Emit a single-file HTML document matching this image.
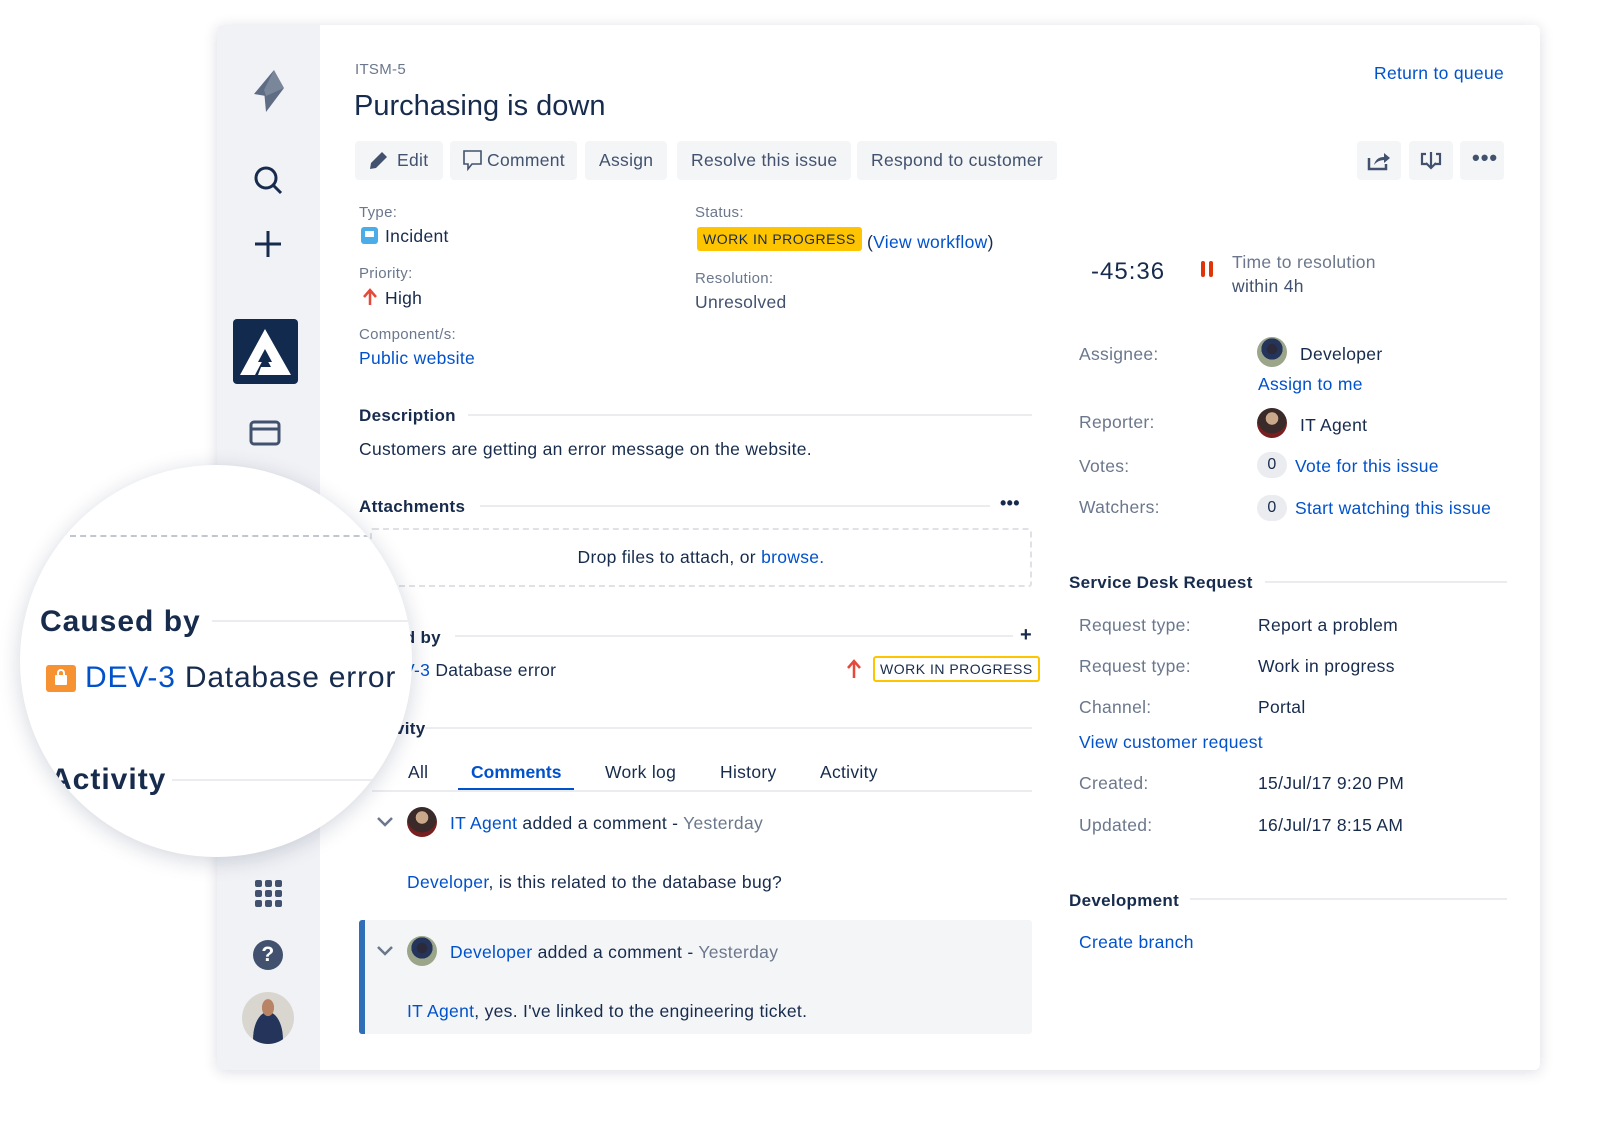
<!DOCTYPE html><html><head><meta charset="utf-8"><style>
*{margin:0;padding:0;box-sizing:border-box}
body{width:1600px;height:1123px;background:#fff;font-family:"Liberation Sans",sans-serif;color:#172b4d;position:relative;overflow:hidden;font-size:17.5px;letter-spacing:.3px}
.a{position:absolute;white-space:nowrap}
.card{position:absolute;left:217px;top:25px;width:1323px;height:1045px;background:#fff;border-radius:6px;box-shadow:0 2px 14px rgba(9,30,66,.15);overflow:hidden}
.side{position:absolute;left:217px;top:25px;width:103px;height:1045px;background:#f1f2f6;border-radius:6px 0 0 6px}
.lab{color:#6b778c}
.lnk{color:#0052cc}
.btn{position:absolute;top:141px;height:39px;background:#f4f5f7;border-radius:4px;font-size:17.5px;line-height:39px;color:#42526e;padding:0 14px}
.hd{font-weight:bold;font-size:17px}
.line{position:absolute;height:2px;background:#ebecf0}
.ib{position:absolute;top:141px;width:44px;height:39px;background:#f4f5f7;border-radius:4px}
.av{position:absolute;border-radius:50%;width:30px;height:30px;background:radial-gradient(circle at 50% 35%,#c9a98a 0 25%,#3a2a2a 26% 60%,#7a1f1f 61%)}
.av2{background:radial-gradient(circle at 50% 40%,#2a2a3a 0 22%,#24345a 23% 45%,#9aa58a 46%)}
.cnt{position:absolute;width:30px;height:26px;border-radius:13px;background:#ebecf0;text-align:center;line-height:26px;font-size:16px}
.wip{position:absolute;background:#ffc400;color:#172b4d;font-size:14px;letter-spacing:.5px;padding:0 6px;line-height:24px;border-radius:3px}
</style></head><body>
<div class="card"></div>
<div class="side"></div>
<svg class="a" style="left:250px;top:68px" width="38" height="46" viewBox="0 0 38 46"><path d="M24 2 L4 26 L16 28 Z" fill="#5e6c84"/><path d="M14 22 L34 20 L16 44 Z" fill="#5e6c84"/><path d="M24 2 L14 22 L16 28 L34 20 Z" fill="#7a869a"/></svg>
<svg class="a" style="left:253px;top:165px" width="32" height="32" viewBox="0 0 32 32"><circle cx="13" cy="13" r="10" fill="none" stroke="#172b4d" stroke-width="3"/><path d="M20 20 L28 28" stroke="#172b4d" stroke-width="3"/></svg>
<svg class="a" style="left:254px;top:230px" width="28" height="28"><path d="M14 1V27M1 14H27" stroke="#172b4d" stroke-width="3"/></svg>
<div class="a" style="left:233px;top:319px;width:65px;height:65px;background:#112a4e;border-radius:4px"></div>
<svg class="a" style="left:233px;top:319px" width="65" height="65" viewBox="0 0 65 65"><path d="M32 10 L7 56 H22 L32 37 L38 48 H28 L25 56 H58 Z" fill="#fff"/><path d="M32 30 L25 43 H39 Z" fill="#112a4e"/></svg>
<svg class="a" style="left:249px;top:420px" width="32" height="26"><rect x="2" y="2" width="28" height="22" rx="3" fill="none" stroke="#42526e" stroke-width="3"/><path d="M2 9H30" stroke="#42526e" stroke-width="3"/></svg>
<svg class="a" style="left:255px;top:880px" width="28" height="28"><g fill="#42526e"><rect x="0" y="0" width="7" height="7" rx="2"/><rect x="10" y="0" width="7" height="7" rx="2"/><rect x="20" y="0" width="7" height="7" rx="2"/><rect x="0" y="10" width="7" height="7" rx="2"/><rect x="10" y="10" width="7" height="7" rx="2"/><rect x="20" y="10" width="7" height="7" rx="2"/><rect x="0" y="20" width="7" height="7" rx="2"/><rect x="10" y="20" width="7" height="7" rx="2"/><rect x="20" y="20" width="7" height="7" rx="2"/></g></svg>
<div class="a" style="left:253px;top:940px;width:30px;height:30px;border-radius:50%;background:#42526e;color:#fff;font-weight:bold;font-size:21px;text-align:center;line-height:30px">?</div>
<div class="a" style="left:242px;top:992px;width:52px;height:52px;border-radius:50%;background:radial-gradient(ellipse at 50% 30%,#b98466 0 16%,transparent 17%),radial-gradient(ellipse at 50% 90%,#24345a 0 40%,transparent 41%),#d9d6d0"></div>

<div class="a lab" style="left:355px;top:61px;font-size:15px">ITSM-5</div>
<div class="a" style="left:354px;top:90px;font-size:29px;letter-spacing:0">Purchasing is down</div>
<div class="a lnk" style="left:1374px;top:63px">Return to queue</div>
<div class="btn" style="left:355px;width:88px;padding-left:42px">Edit</div>
<svg class="a" style="left:367px;top:150px" width="22" height="22"><path d="M3 19 L4 13 L15 2 L20 7 L9 18 Z" fill="#42526e"/></svg>
<div class="btn" style="left:450px;width:127px;padding-left:37px">Comment</div>
<svg class="a" style="left:463px;top:150px" width="20" height="22"><path d="M1 1H18V14H9L5 19V14H1Z" fill="none" stroke="#42526e" stroke-width="1.6"/></svg>
<div class="btn" style="left:585px">Assign</div>
<div class="btn" style="left:677px">Resolve this issue</div>
<div class="btn" style="left:857px">Respond to customer</div>
<div class="ib" style="left:1357px"></div><div class="ib" style="left:1409px"></div><div class="ib" style="left:1460px"></div>
<svg class="a" style="left:1367px;top:150px" width="24" height="22"><path d="M2 8V19H19V14" fill="none" stroke="#42526e" stroke-width="2.5"/><path d="M7 15 Q9 7 17 7V3L23 8L17 13V10Q11 10 7 15Z" fill="#42526e"/></svg>
<svg class="a" style="left:1420px;top:150px" width="22" height="22"><path d="M6 4H2V14H7M15 14H20V4H16" fill="none" stroke="#42526e" stroke-width="2.2"/><path d="M11 2V18M6 13L11 18L16 13" fill="none" stroke="#42526e" stroke-width="2.2"/></svg>
<div class="a" style="left:1472px;top:145px;font-size:22px;color:#42526e;font-weight:bold;letter-spacing:1px">•••</div>

<div class="a lab" style="left:359px;top:204px;font-size:15px">Type:</div>
<div class="a" style="left:361px;top:227px;width:17px;height:17px;border-radius:3px;background:#4bade8"></div>
<div class="a" style="left:365px;top:231px;width:9px;height:6px;background:#fff"></div>
<div class="a" style="left:385px;top:226px">Incident</div>
<div class="a lab" style="left:359px;top:265px;font-size:15px">Priority:</div>
<svg class="a" style="left:362px;top:288px" width="16" height="18"><path d="M8 17V3M2 9L8 2L14 9" fill="none" stroke="#e5493a" stroke-width="2.5"/></svg>
<div class="a" style="left:385px;top:288px">High</div>
<div class="a lab" style="left:359px;top:326px;font-size:15px">Component/s:</div>
<div class="a lnk" style="left:359px;top:348px">Public website</div>
<div class="a lab" style="left:695px;top:204px;font-size:15px">Status:</div>
<div class="wip" style="left:697px;top:227px">WORK IN PROGRESS</div>
<div class="a" style="left:867px;top:232px"><span>(</span><span class="lnk">View workflow</span>)</div>
<div class="a lab" style="left:695px;top:270px;font-size:15px">Resolution:</div>
<div class="a" style="left:695px;top:292px;color:#42526e">Unresolved</div>

<div class="a hd" style="left:359px;top:406px">Description</div><div class="line" style="left:468px;top:414px;width:564px"></div>
<div class="a" style="left:359px;top:439px">Customers are getting an error message on the website.</div>
<div class="a hd" style="left:359px;top:497px">Attachments</div><div class="line" style="left:480px;top:505px;width:510px"></div>
<div class="a" style="left:1000px;top:493px;font-size:18px;font-weight:bold">•••</div>
<div class="a" style="left:370px;top:528px;width:662px;height:59px;border:2px dashed #dfe1e6;border-radius:3px;text-align:center;line-height:55px">Drop files to attach, or <span class="lnk">browse.</span></div>
<div class="a hd" style="left:395px;top:628px">ed by</div><div class="line" style="left:455px;top:635px;width:558px"></div>
<div class="a" style="left:1020px;top:624px;font-size:20px;font-weight:bold">+</div>
<div class="a" style="left:403px;top:660px"><span class="lnk">V-3</span> Database error</div>
<svg class="a" style="left:846px;top:659px" width="16" height="20"><path d="M8 19V3M2 9L8 2L14 9" fill="none" stroke="#e5493a" stroke-width="2.5"/></svg>
<div class="a" style="left:873px;top:656px;border:2px solid #ffc400;border-radius:3px;padding:0 5px;line-height:22px;font-size:14px;letter-spacing:.5px">WORK IN PROGRESS</div>
<div class="a hd" style="left:395px;top:719px">vity</div><div class="line" style="left:425px;top:727px;width:607px"></div>
<div class="a" style="left:408px;top:762px">All</div>
<div class="a lnk" style="left:471px;top:762px;font-weight:bold;letter-spacing:0">Comments</div>
<div class="a" style="left:458px;top:788px;width:116px;height:3px;background:#0052cc"></div>
<div class="a" style="left:605px;top:762px">Work log</div>
<div class="a" style="left:720px;top:762px">History</div>
<div class="a" style="left:820px;top:762px">Activity</div>
<div class="line" style="left:372px;top:790px;width:660px"></div>
<svg class="a" style="left:376px;top:816px" width="18" height="12"><path d="M2 2L9 9L16 2" fill="none" stroke="#6b778c" stroke-width="2.5"/></svg>
<div class="av" style="left:407px;top:807px"></div>
<div class="a" style="left:450px;top:813px"><span class="lnk">IT Agent</span> added a comment - <span class="lab">Yesterday</span></div>
<div class="a" style="left:407px;top:872px"><span class="lnk">Developer</span>, is this related to the database bug?</div>
<div class="a" style="left:359px;top:920px;width:673px;height:114px;background:#f4f5f7;border-left:6px solid #2f6fb7;border-radius:3px"></div>
<svg class="a" style="left:376px;top:945px" width="18" height="12"><path d="M2 2L9 9L16 2" fill="none" stroke="#6b778c" stroke-width="2.5"/></svg>
<div class="av av2" style="left:407px;top:936px"></div>
<div class="a" style="left:450px;top:942px"><span class="lnk">Developer</span> added a comment - <span class="lab">Yesterday</span></div>
<div class="a" style="left:407px;top:1001px"><span class="lnk">IT Agent</span>, yes. I've linked to the engineering ticket.</div>

<div class="a" style="left:1091px;top:258px;font-size:24px;letter-spacing:1px">-45:36</div>
<div class="a" style="left:1201px;top:261px;width:4px;height:16px;background:#de350b;border-radius:2px"></div>
<div class="a" style="left:1209px;top:261px;width:4px;height:16px;background:#de350b;border-radius:2px"></div>
<div class="a lab" style="left:1232px;top:252px">Time to resolution</div>
<div class="a" style="left:1232px;top:276px;color:#42526e">within 4h</div>
<div class="a lab" style="left:1079px;top:344px">Assignee:</div>
<div class="av av2" style="left:1257px;top:337px"></div>
<div class="a" style="left:1300px;top:344px">Developer</div>
<div class="a lnk" style="left:1258px;top:374px">Assign to me</div>
<div class="a lab" style="left:1079px;top:412px">Reporter:</div>
<div class="av" style="left:1257px;top:408px"></div>
<div class="a" style="left:1300px;top:415px">IT Agent</div>
<div class="a lab" style="left:1079px;top:456px">Votes:</div>
<div class="cnt" style="left:1257px;top:452px">0</div>
<div class="a lnk" style="left:1295px;top:456px">Vote for this issue</div>
<div class="a lab" style="left:1079px;top:497px">Watchers:</div>
<div class="cnt" style="left:1257px;top:495px">0</div>
<div class="a lnk" style="left:1295px;top:498px">Start watching this issue</div>
<div class="a hd" style="left:1069px;top:573px">Service Desk Request</div><div class="line" style="left:1265px;top:581px;width:242px"></div>
<div class="a lab" style="left:1079px;top:615px">Request type:</div><div class="a" style="left:1258px;top:615px">Report a problem</div>
<div class="a lab" style="left:1079px;top:656px">Request type:</div><div class="a" style="left:1258px;top:656px">Work in progress</div>
<div class="a lab" style="left:1079px;top:697px">Channel:</div><div class="a" style="left:1258px;top:697px">Portal</div>
<div class="a lnk" style="left:1079px;top:732px">View customer request</div>
<div class="a lab" style="left:1079px;top:773px">Created:</div><div class="a" style="left:1258px;top:773px">15/Jul/17 9:20 PM</div>
<div class="a lab" style="left:1079px;top:815px">Updated:</div><div class="a" style="left:1258px;top:815px">16/Jul/17 8:15 AM</div>
<div class="a hd" style="left:1069px;top:891px">Development</div><div class="line" style="left:1190px;top:898px;width:317px"></div>
<div class="a lnk" style="left:1079px;top:932px">Create branch</div>

<div class="a" style="left:20px;top:465px;width:392px;height:392px;border-radius:50%;background:#fff;box-shadow:0 4px 22px rgba(9,30,66,.18);overflow:hidden">
 <div class="a" style="left:50px;top:70px;width:320px;border-top:2px dashed #c1c7d0"></div>
 <div class="a" style="left:20px;top:140px;font-size:30px;font-weight:bold;letter-spacing:1px">Caused by</div>
 <div class="a" style="left:192px;top:155px;width:200px;height:2px;background:#ebecf0"></div>
 <div class="a" style="left:26px;top:200px;width:30px;height:27px;background:#f79232;border-radius:3px"></div>
 <div class="a" style="left:35px;top:210px;width:12px;height:10px;background:#fff;border-radius:1px"></div>
 <div class="a" style="left:37px;top:204px;width:8px;height:9px;border:2px solid #fff;border-bottom:none;border-radius:4px 4px 0 0"></div>
 <div class="a" style="left:65px;top:196px;font-size:30px;letter-spacing:.8px"><span class="lnk">DEV-3</span> Database error</div>
 <div class="a" style="left:30px;top:298px;font-size:30px;font-weight:bold;letter-spacing:1px">Activity</div>
 <div class="a" style="left:152px;top:314px;width:240px;height:2px;background:#ebecf0"></div>
</div>
</body></html>
